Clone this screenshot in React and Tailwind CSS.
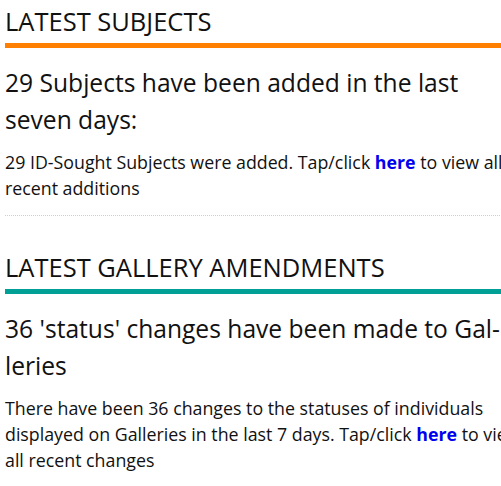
const sections = [
  {
    title: "LATEST SUBJECTS",
    bar: "border-[#ff7f00]",
    headline: "29 Subjects have been added in the last seven days:",
    before: "29 ID-Sought Subjects were added. Tap/click ",
    after: " to view all recent additions",
  },
  {
    title: "LATEST GALLERY AMENDMENTS",
    bar: "border-[#00a096]",
    headline: "36 'status' changes have been made to Gal\u00ADleries",
    before:
      "There have been 36 changes to the statuses of individuals displayed on Galleries in the last 7 days. Tap/click ",
    after: " to view all recent changes",
  },
];

export default function App() {
  return (
    <div
      lang="en"
      className="w-[501px] h-[486px] overflow-hidden bg-white text-[#111]"
      style={{ fontFamily: "'Open Sans', 'Noto Sans', sans-serif" }}
    >
      <div className="w-[529px] px-[5px]">
        {sections.map((s, i) => (
          <section
            key={s.title}
            className={i === 0 ? "pt-[5px] pb-[14px] border-b border-dotted border-[#cfcfcf]" : "pt-[35px]"}
          >
            <h2 className={`text-[25.5px] leading-[32px] pb-[6px] border-b-[5px] ${s.bar}`}>{s.title}</h2>
            <h3 className="mt-[16px] text-[24.6px] leading-[37px]">{s.headline}</h3>
            <p className="mt-[11px] text-[17.8px] leading-[26px]">
              {s.before}
              <a href="#" className="font-bold text-[#0000ee]">
                here
              </a>
              {s.after}
            </p>
          </section>
        ))}
      </div>
    </div>
  );
}
